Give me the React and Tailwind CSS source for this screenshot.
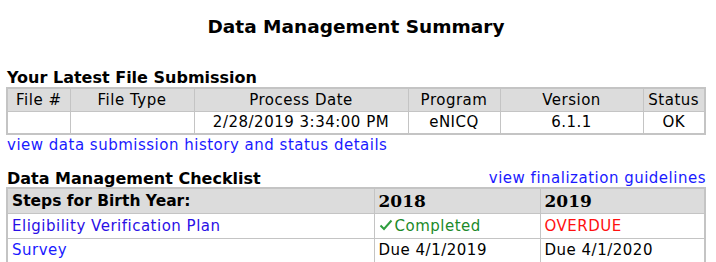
const submissionCols = [
  { label: "File #", width: "w-[63px]", value: "" },
  { label: "File Type", width: "w-[124px]", value: "" },
  { label: "Process Date", width: "w-[214px]", value: "2/28/2019 3:34:00 PM" },
  { label: "Program", width: "w-[92px]", value: "eNICQ" },
  { label: "Version", width: "w-[143px]", value: "6.1.1" },
  { label: "Status", width: "", value: "OK" },
];

function Check() {
  return (
    <svg width="14" height="12" viewBox="0 0 14 12" className="inline-block mr-[2px] -mt-[3px]">
      <path d="M1.5 6.5 L5 10 L12.5 1.5" fill="none" stroke="#2e9e3e" strokeWidth="2" />
    </svg>
  );
}

const cell = "border border-[#c4c4c4] px-[4px] py-0";

export default function App() {
  return (
    <div className="w-[716px] h-[262px] overflow-hidden bg-white text-black font-['DejaVu_Sans',Verdana,sans-serif] text-[15px] tracking-[0.5px]">
      <h1 className="text-center font-bold text-[18.5px] tracking-normal pt-[15px] leading-[24px] pr-[4px]">
        Data Management Summary
      </h1>

      <div className="pl-[6px] pr-[10px]">
        <h2 className="font-bold text-[16px] tracking-normal leading-[17px] mt-[30px] pl-[1px]">
          Your Latest File Submission
        </h2>
        <table className="w-full mt-[1px] border-collapse border-2 border-[#c4c4c4] text-center">
          <thead>
            <tr className="bg-[#dcdcdc] h-[23px]">
              {submissionCols.map((c) => (
                <th key={c.label} className={`${c.width} font-normal ${cell} leading-[20px]`}>
                  {c.label}
                </th>
              ))}
            </tr>
          </thead>
          <tbody>
            <tr className="h-[23px]">
              {submissionCols.map((c) => (
                <td key={c.label} className={`${cell} leading-[20px]`}>
                  {c.value}
                </td>
              ))}
            </tr>
          </tbody>
        </table>
        <a href="#" className="block text-[#1a1aff] leading-[20px] pl-[1px]">
          view data submission history and status details
        </a>

        <div className="flex items-end justify-between mt-[15px]">
          <h2 className="font-bold text-[16px] tracking-normal leading-[17px] pl-[1px]">
            Data Management Checklist
          </h2>
          <a href="#" className="text-[#1a1aff] leading-[17px]">view finalization guidelines</a>
        </div>
        <table className="w-full border-collapse border-2 border-[#c4c4c4] text-left leading-[20px]">
          <thead>
            <tr className="bg-[#dcdcdc] h-[25px]">
              <th className={`w-[367px] font-bold text-[15.5px] tracking-normal ${cell}`}>
                Steps for Birth Year:
              </th>
              <th className={`w-[166px] ${cell} font-['DejaVu_Serif',serif] text-[17px] font-bold tracking-normal`}>
                2018
              </th>
              <th className={`${cell} font-['DejaVu_Serif',serif] text-[17px] font-bold tracking-normal`}>
                2019
              </th>
            </tr>
          </thead>
          <tbody>
            <tr className="h-[25px]">
              <td className={cell}>
                <a href="#" className="text-[#2a10e6]">Eligibility Verification Plan</a>
              </td>
              <td className={`${cell} text-[#1b8a2a]`}>
                <Check />Completed
              </td>
              <td className={`${cell} text-[#ff1010]`}>OVERDUE</td>
            </tr>
            <tr className="h-[25px]">
              <td className={cell}>
                <a href="#" className="text-[#1a1aff]">Survey</a>
              </td>
              <td className={cell}>Due 4/1/2019</td>
              <td className={cell}>Due 4/1/2020</td>
            </tr>
          </tbody>
        </table>
      </div>
    </div>
  );
}
